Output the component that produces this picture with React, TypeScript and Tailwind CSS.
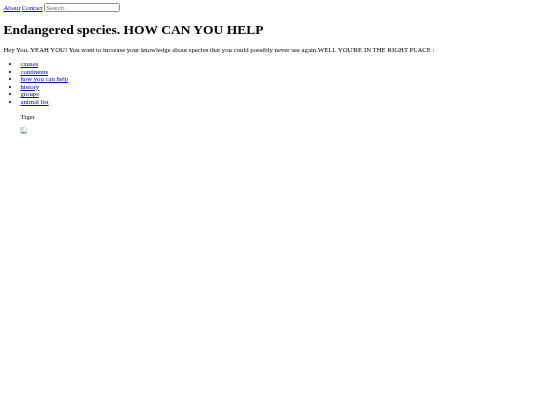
const links = ["causes", "continents", "how you can help", "history", "groups", "animal list"];

const App = () => {
  return (
    <div className="min-h-[405px] bg-white px-[3.4px] pt-[3px] font-['Liberation_Serif',serif] text-[6.75px] leading-[7.6px] text-black blur-[0.3px]">
      <nav className="flex h-[9px] items-center gap-[1.5px]">
        <a href="#" className="text-[#0000ee] underline">About</a>
        <a href="#" className="text-[#0000ee] underline">Contact</a>
        <input
          placeholder="Search..."
          className="h-[9px] w-[76px] rounded-[1.5px] border border-[#8f8f8f] bg-white px-[1px] text-[5.6px] placeholder:text-[#757575] font-['Liberation_Sans',sans-serif]"
        />
      </nav>
      <h1 className="mt-[9.6px] text-[13.5px] font-bold leading-[15.5px]">Endangered species. HOW CAN YOU HELP</h1>
      <p className="mt-[9px]">
        Hey You. YEAH YOU! You want to increase your knowledge about species that you could possibly never see again.WELL YOU'RE IN THE RIGHT PLACE :
      </p>
      <ul className="mt-[6.4px] list-disc pl-[17px]">
        {links.map((l) => (
          <li key={l}>
            <a href="#" className="text-[#0000ee] underline">{l}</a>
          </li>
        ))}
      </ul>
      <div className="pl-[17px]">
        <p className="mt-[7px]">Tiger</p>
        <svg className="mt-[7px] block" width="7" height="7" viewBox="0 0 16 16">
          <path d="M1 1h10l4 4v10H1z" fill="#fff" stroke="#b4b4b4" strokeWidth="1.5" />
          <path d="M2 14l4-5 3 3 2-2 3 4z" fill="#5aa84c" />
          <path d="M2 3h7v5H2z" fill="#c3d5ee" />
        </svg>
      </div>
    </div>
  );
};

export default App;
